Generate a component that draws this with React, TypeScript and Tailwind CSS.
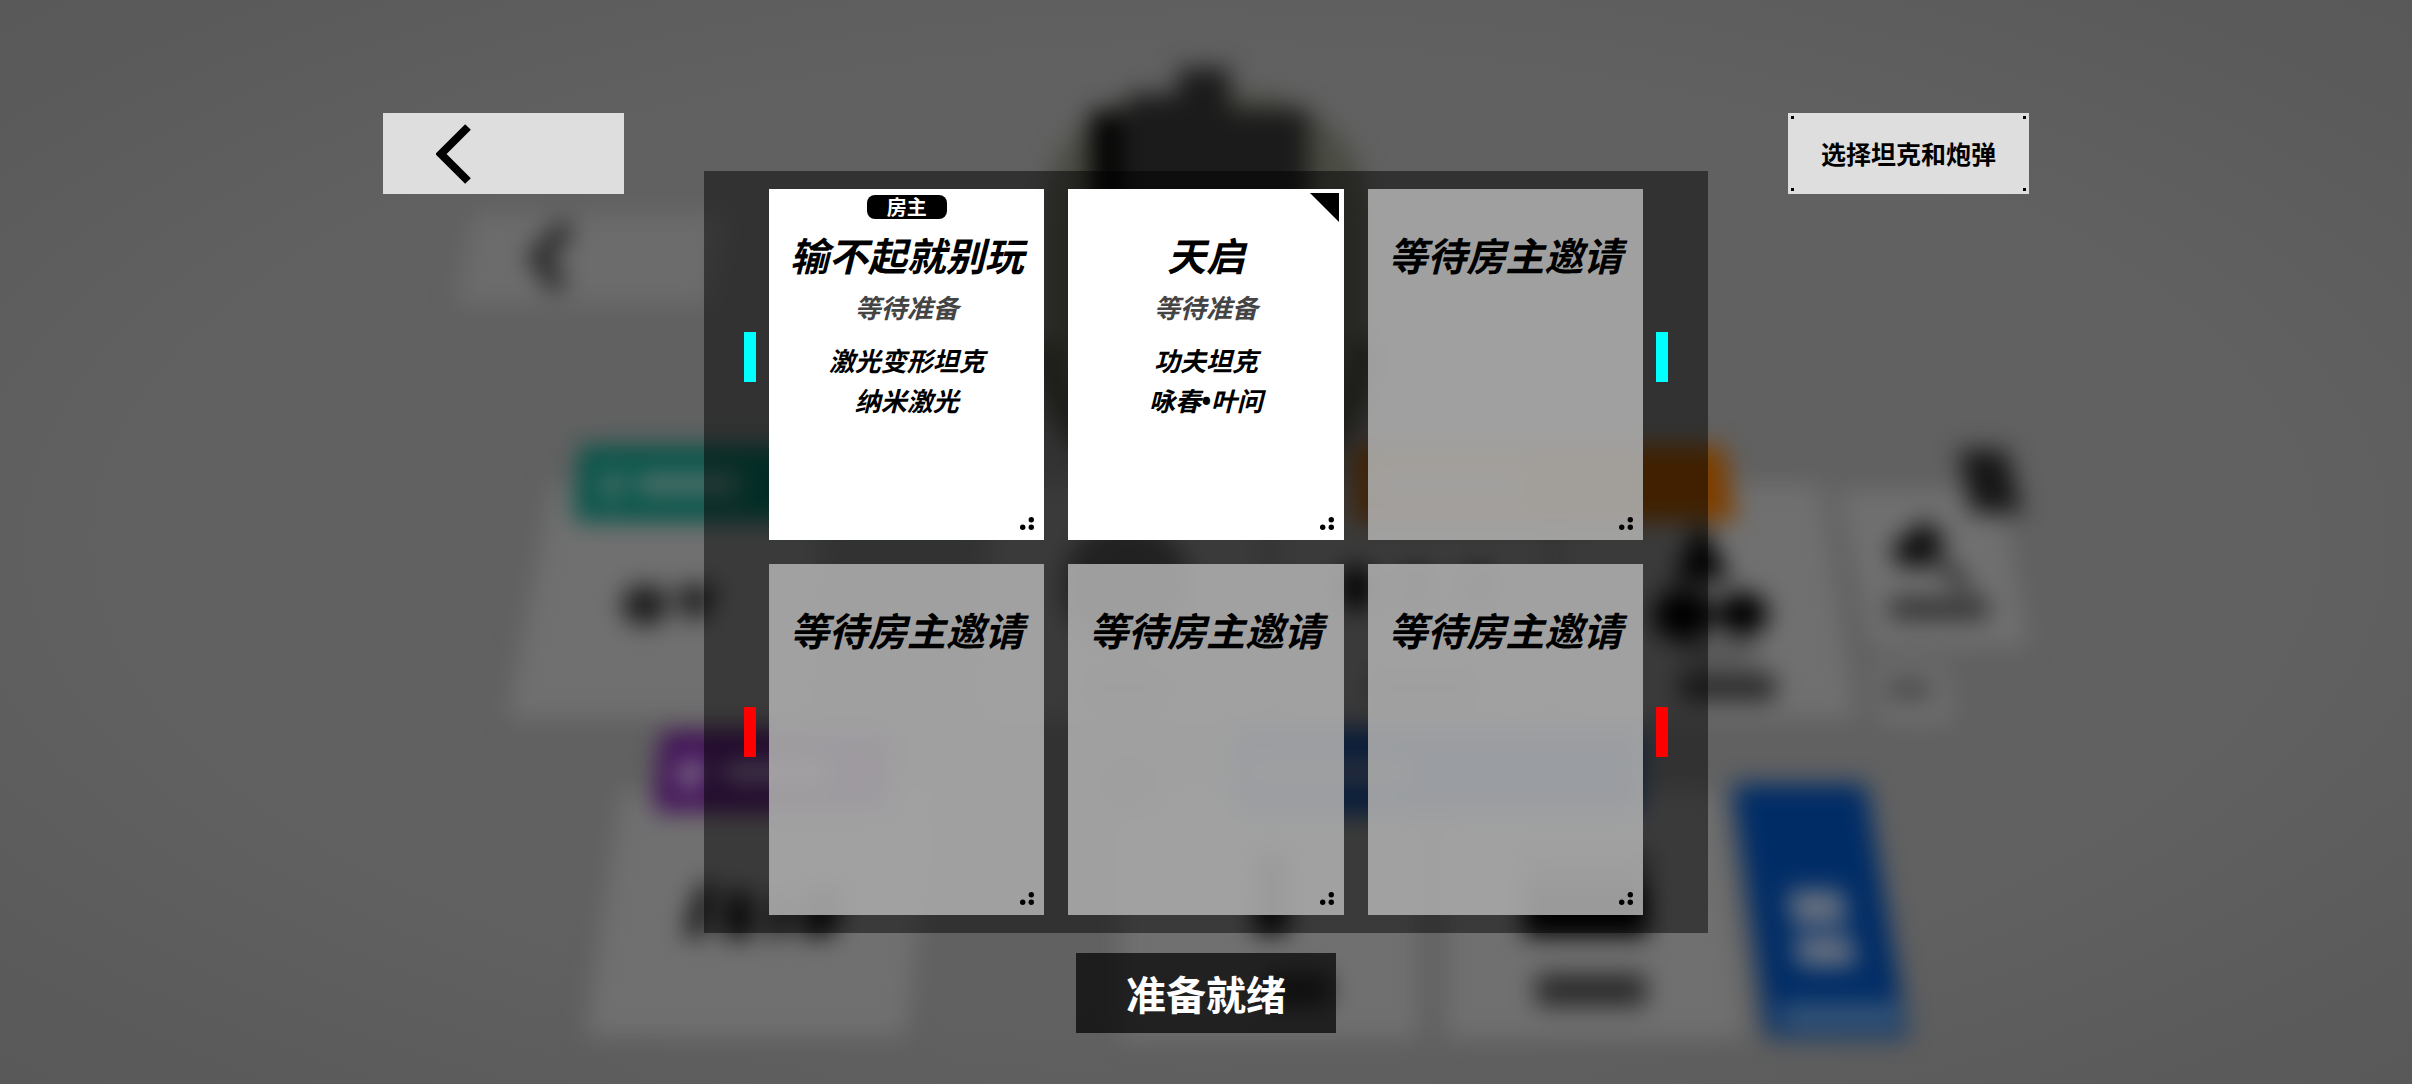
type Player = {
  name: string;
  host?: boolean;
  self?: boolean;
  status?: string;
  tank?: string;
  shell?: string;
};

const EMPTY_SLOT: Player = { name: "等待房主邀请" };

const teams: { id: string; bar: string; slots: Player[] }[] = [
  {
    id: "cyan",
    bar: "bg-[#00ffff]",
    slots: [
      {
        name: "输不起就别玩",
        host: true,
        status: "等待准备",
        tank: "激光变形坦克",
        shell: "纳米激光",
      },
      {
        name: "天启",
        self: true,
        status: "等待准备",
        tank: "功夫坦克",
        shell: "咏春•叶问",
      },
      EMPTY_SLOT,
    ],
  },
  {
    id: "red",
    bar: "bg-[#ff0000]",
    slots: [EMPTY_SLOT, EMPTY_SLOT, EMPTY_SLOT],
  },
];

function LobbyBackdrop() {
  return (
    <svg
      className="absolute inset-0 h-full w-full"
      viewBox="0 0 2412 1084"
      preserveAspectRatio="xMidYMid slice"
      aria-hidden="true"
    >
      <defs>
        <radialGradient id="vignette" cx="50%" cy="50%" r="72%">
          <stop offset="0.6" stopColor="#616161" />
          <stop offset="1" stopColor="#585858" />
        </radialGradient>
        <filter
          id="soft"
          x="-10%"
          y="-10%"
          width="120%"
          height="120%"
          colorInterpolationFilters="sRGB"
        >
          <feGaussianBlur stdDeviation="12" />
        </filter>
      </defs>
      <rect width="2412" height="1084" fill="url(#vignette)" />

      <g filter="url(#soft)">
        {/* back button of the menu */}
        <path d="M474 214H728L708 304H456Z" fill="#6c6c6c" />
        <path d="M568 226L538 257L560 288" fill="none" stroke="#1c1c1c" strokeWidth="16" />

        {/* tank */}
        <rect x="1044" y="94" width="324" height="350" rx="120" fill="#4a4b42" />
        <path d="M1044 340Q1052 420 1100 450M1368 340Q1360 420 1312 450" fill="none" stroke="#33332c" strokeWidth="26" />
        <path
          d="M1091 111H1128V94H1178V68H1230V110H1308V420H1091Z"
          fill="#1b1b1b"
        />
        <path d="M1091 111H1120V420H1091Z" fill="#020202" />

        {/* upper row of modes */}
        <path d="M553 484H826L806 718H508Z" fill="#707070" />
        <path d="M992 484H1262V718H980Z" fill="#707070" />
        <path d="M1277 484H1546V718H1277Z" fill="#707070" />
        <path d="M1560 484H1820L1855 718H1560Z" fill="#707070" />
        <path d="M580 446H1000V521H574Z" fill="#045448" />
        <path d="M606 470H622L618 500H600ZM636 474H740V494H636Z" fill="#5c7470" />
        <path d="M1355 446H1724L1736 521H1355Z" fill="#7c3e00" />
        <rect x="1375" y="470" width="150" height="30" fill="#80684e" />
        <ellipse cx="1126" cy="586" rx="64" ry="64" fill="#404040" />
        <ellipse cx="645" cy="605" rx="23" ry="20" fill="#1c1c1c" />
        <path d="M674 586H718L706 618H684Z" fill="#202020" />
        <ellipse cx="1356" cy="588" rx="17" ry="23" fill="#080808" />
        <ellipse cx="1415" cy="586" rx="18" ry="22" fill="#404040" />
        <ellipse cx="1478" cy="586" rx="18" ry="22" fill="#404040" />
        <rect x="1084" y="672" width="84" height="30" fill="#505050" />
        <rect x="1370" y="672" width="108" height="30" fill="#505050" />

        <path d="M1700 530L1724 576H1680Z" fill="#000" stroke="#000" strokeWidth="8" />
        <ellipse cx="1683" cy="615" rx="30" ry="26" fill="#000" />
        <ellipse cx="1742" cy="614" rx="26" ry="22" fill="#000" />
        <rect x="1684" y="646" width="72" height="16" fill="#4c4c4c" />
        <rect x="1680" y="674" width="95" height="26" fill="#262626" />

        <path d="M1838 490H2000L2028 646H1872Z" fill="#707070" />
        <path d="M1958 450H2006L2022 513H1972Z" fill="#161616" />
        <path
          d="M1896 550L1924 526L1940 540L1926 562H1904Z"
          fill="#0c0c0c"
          stroke="#0c0c0c"
          strokeWidth="9"
        />
        <path d="M1930 552L1968 588" stroke="#222" strokeWidth="11" />
        <rect x="1890" y="598" width="98" height="21" fill="#303030" />
        <path d="M1872 664H1946L1956 724H1880Z" fill="#6d6d6d" />
        <rect x="1888" y="683" width="42" height="13" fill="#383838" />

        {/* lower row of modes */}
        <path d="M622 790H932L906 1036H586Z" fill="#707070" />
        <path d="M1120 790H1418V1038H1120Z" fill="#707070" />
        <path d="M1446 790H1716L1746 1038H1446Z" fill="#707070" />
        <path d="M662 732H895L888 811H654Z" fill="#3f0c56" />
        <path d="M680 758H706L700 790H676ZM722 760H828V784H722Z" fill="#7a6a86" />
        <path d="M1233 730H1640V814H1233Z" fill="#0c3470" />
        <rect x="1246" y="756" width="164" height="32" fill="#445470" />
        <path d="M700 884H716L704 936H684ZM728 892H752V938H724ZM778 892H794L784 936H768ZM808 888H846L832 936H800Z" fill="#0c0c0c" />
        <rect x="1104" y="760" width="52" height="52" fill="#4a4a4a" />
        <path d="M1256 852H1288V934H1254Z" fill="#0a0a0a" />
        <path d="M1522 850H1648V892H1522Z" fill="#3c3c3c" />
        <path d="M1524 886H1648V936H1524Z" fill="#000" />
        <rect x="1268" y="975" width="62" height="30" fill="#2c2c2c" />
        <rect x="1536" y="974" width="110" height="32" fill="#2a2a2a" />

        <path d="M1732 784H1866L1908 1037H1768Z" fill="#002c66" />
        <path d="M1778 1004H1898L1902 1028H1782Z" fill="#3a5878" />
        <path d="M1788 890H1842L1848 924H1792ZM1794 936H1851L1857 966H1798Z" fill="#6a7280" />
      </g>
    </svg>
  );
}

function PlayerCard({ player }: { player: Player }) {
  const joined = Boolean(player.status);

  return (
    <article
      className={
        joined
          ? "relative flex h-[351px] flex-col items-center bg-white pt-1.5"
          : "relative flex h-[351px] flex-col items-center bg-[#b1b1b1]/87 pt-1.5"
      }
    >
      <div className="h-6">
        {player.host && (
          <span className="block w-20 rounded-lg bg-black text-center text-[20px] leading-6 font-bold text-white">
            房主
          </span>
        )}
      </div>
      <h2 className="mt-[15px] text-[39px] leading-10 font-bold whitespace-nowrap italic">
        {player.name}
      </h2>
      {joined && (
        <div className="mt-[13px] text-center text-[26px] leading-10 font-bold italic">
          <p className="text-[#444]">{player.status}</p>
          <p className="mt-[13px]">{player.tank}</p>
          <p className="font-['Noto_Sans','Noto_Sans_CJK_SC',sans-serif] leading-[43px]">
            {player.shell}
          </p>
        </div>
      )}

      {player.self && (
        <svg className="absolute top-1 right-[5px] h-[29px] w-[29px]" viewBox="0 0 29 29">
          <path d="M0 0H29V29Z" />
        </svg>
      )}
      <svg className="absolute right-2.5 bottom-2.5 h-[13px] w-[14px]" viewBox="0 0 14 13">
        <circle cx="2.7" cy="10.3" r="2.7" />
        <circle cx="11.3" cy="10.3" r="2.7" />
        <circle cx="11.3" cy="2.7" r="2.7" />
      </svg>
    </article>
  );
}

function TeamBar({ color }: { color: string }) {
  return (
    <div className="flex items-center pb-[15px]">
      <span className={`h-[50px] w-3 ${color}`} />
    </div>
  );
}

export default function App() {
  return (
    <div className="relative min-h-screen overflow-hidden bg-[#616161] font-['Noto_Sans_CJK_SC',sans-serif] text-black">
      <LobbyBackdrop />

      <div className="relative mx-auto flex w-full max-w-[1646px] items-start gap-20 pt-[113px]">
        <button
          type="button"
          aria-label="返回"
          className="h-[81px] w-[241px] shrink-0 bg-[#dedede] pl-[53px]"
        >
          <svg className="h-[60px] w-[35px]" viewBox="0 0 35 60">
            <path d="M32 3L5 30L32 57" fill="none" stroke="#000" strokeWidth="8" />
          </svg>
        </button>

        <main className="mt-[58px] flex flex-1 flex-col items-center gap-5">
          <div className="flex w-full flex-col gap-6 bg-black/48 px-10 py-[18px]">
            {teams.map((team) => (
              <section key={team.id} className="flex gap-[13px]">
                <TeamBar color={team.bar} />
                <div className="grid flex-1 grid-cols-3 gap-6">
                  {team.slots.map((player, i) => (
                    <PlayerCard key={i} player={player} />
                  ))}
                </div>
                <TeamBar color={team.bar} />
              </section>
            ))}
          </div>

          <button
            type="button"
            className="h-20 w-[260px] bg-black/70 text-[40px] leading-none font-bold text-white"
          >
            准备就绪
          </button>
        </main>

        <button
          type="button"
          className="relative h-[81px] w-[241px] shrink-0 bg-[#dedede] text-[25px] leading-none font-bold"
        >
          选择坦克和炮弹
          <span className="absolute top-[3px] left-[3px] size-[3px] bg-black" />
          <span className="absolute top-[3px] right-[3px] size-[3px] bg-black" />
          <span className="absolute bottom-[3px] left-[3px] size-[3px] bg-black" />
          <span className="absolute right-[3px] bottom-[3px] size-[3px] bg-black" />
        </button>
      </div>
    </div>
  );
}
